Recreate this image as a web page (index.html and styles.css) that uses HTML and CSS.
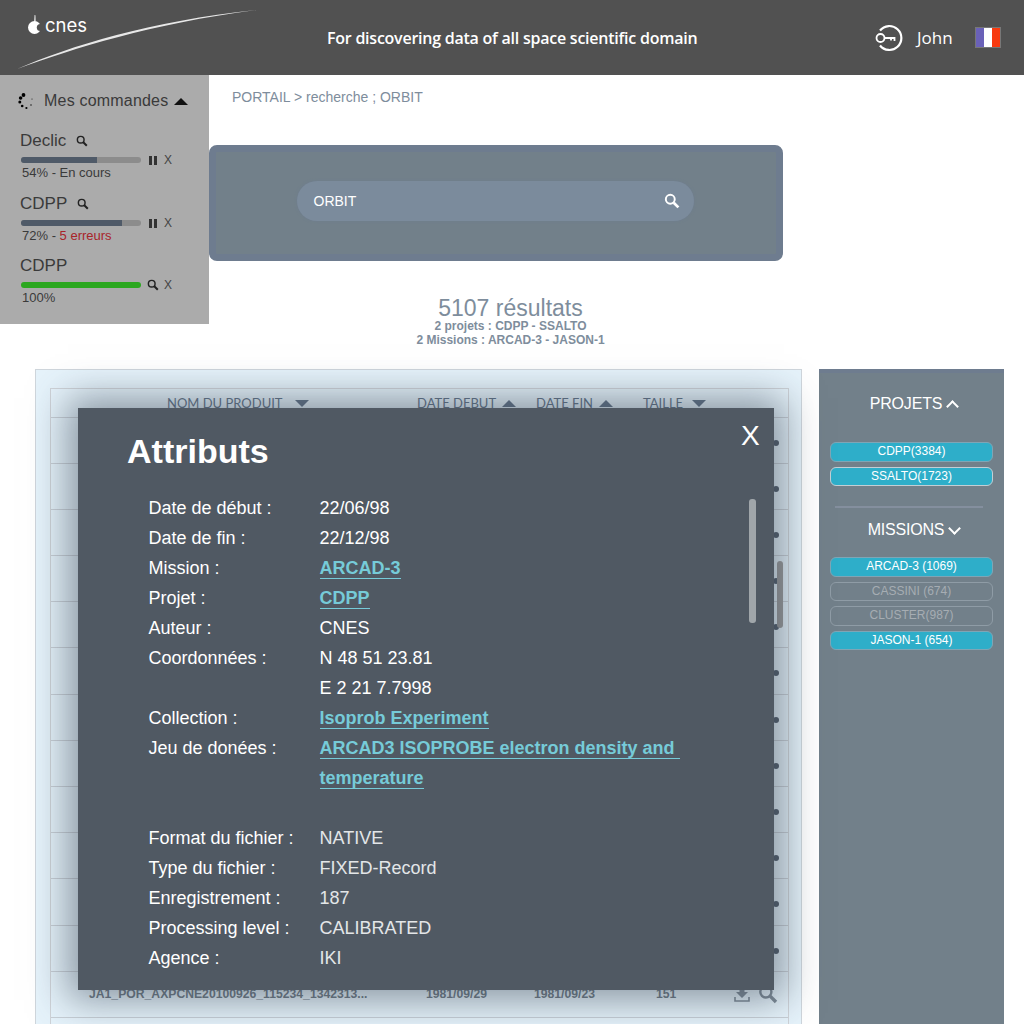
FILE: index.html
```html
<!DOCTYPE html>
<html>

<head>
  <meta charset="UTF-8">
  <title>CNES - Portail</title>
  <link rel="stylesheet" href="styles.css">
</head>

<body>
  <svg class="defs" width="0" height="0">
    <symbol id="loupe" viewBox="0 0 14 14">
      <circle cx="5.5" cy="5.5" r="3.9" fill="none" stroke="currentColor" stroke-width="1.7" />
      <path d="M8.5 8.5L12.6 12.6" stroke="currentColor" stroke-width="2.4" />
    </symbol>
  </svg>

  <header class="topbar">
    <div class="logo">
      <svg class="swoosh" width="260" height="75" viewBox="0 0 260 75">
        <path d="M17 69C70 46 150 21 256 10C150 24 75 48 17 69Z" fill="#e8e8e8" />
      </svg>
      <svg class="logo-mark" width="15" height="20" viewBox="0 0 15 20">
        <path d="M6.6 0L7.4 0.2L7.6 6.6H6.2Z" fill="#fff" />
        <circle cx="6.5" cy="12.5" r="6.5" fill="#fff" />
        <circle cx="12.4" cy="12.5" r="3.6" fill="#515151" />
      </svg>
      <span class="logo-text">cnes</span>
    </div>
    <div class="slogan">For discovering data of all space scientific domain</div>
    <div class="user">
      <svg width="30" height="28" viewBox="0 0 30 28">
        <path d="M6 6.5A12 12 0 1 1 6 21.5" fill="none" stroke="#fff" stroke-width="2.2" />
        <circle cx="6.5" cy="14" r="4" fill="none" stroke="#fff" stroke-width="1.8" />
        <path d="M10.5 14H20.5V17M17 14V16.5" fill="none" stroke="#fff" stroke-width="1.8" />
      </svg>
      <span class="user-name">John</span>
      <div class="flag"><i class="blue"></i><i class="white"></i><i class="red"></i></div>
    </div>
  </header>

  <div class="top">
    <aside class="orders">
      <div class="orders-title">
        <svg width="17" height="18" viewBox="0 0 17 18">
          <circle cx="5.5" cy="3" r="1.9" />
          <circle cx="2.6" cy="6" r="1.8" />
          <circle cx="1.8" cy="10" r="1.5" />
          <circle cx="4.2" cy="14" r="1.3" />
          <circle cx="8.4" cy="16" r="1.1" />
          <circle cx="13" cy="13" r="0.7" />
          <circle cx="14" cy="7" r="0.5" />
        </svg>
        <span>Mes commandes</span>
        <i class="arrow-up dark"></i>
      </div>

      <div class="order first">
        <div class="order-name">Declic <svg class="loupe"><use href="#loupe" /></svg></div>
        <div class="order-bar">
          <div class="track"><div class="fill" style="width: 63%"></div></div>
          <i class="pause"></i><span class="close">X</span>
        </div>
        <div class="order-status">54% - En cours</div>
      </div>

      <div class="order">
        <div class="order-name">CDPP <svg class="loupe"><use href="#loupe" /></svg></div>
        <div class="order-bar">
          <div class="track"><div class="fill" style="width: 84%"></div></div>
          <i class="pause"></i><span class="close">X</span>
        </div>
        <div class="order-status">72% - <span class="errors">5 erreurs</span></div>
      </div>

      <div class="order">
        <div class="order-name">CDPP</div>
        <div class="order-bar">
          <div class="track"><div class="fill done" style="width: 100%"></div></div>
          <svg class="loupe"><use href="#loupe" /></svg><span class="close">X</span>
        </div>
        <div class="order-status">100%</div>
      </div>
    </aside>

    <div class="search-col">
      <div class="breadcrumb">PORTAIL &gt; recherche ; ORBIT</div>
      <div class="search-panel">
        <div class="search-box">
          <span>ORBIT</span>
          <svg class="loupe-big"><use href="#loupe" /></svg>
        </div>
      </div>
      <div class="summary">
        <div class="summary-count">5107 résultats</div>
        <div class="summary-line">2 projets : CDPP - SSALTO</div>
        <div class="summary-line">2 Missions : ARCAD-3 - JASON-1</div>
      </div>
    </div>
  </div>

  <div class="bottom">
    <section class="results">
      <div class="table">
        <div class="row head">
          <div class="c-name">NOM DU PRODUIT <i class="arrow-down"></i></div>
          <div class="c-date">DATE DEBUT <i class="arrow-up"></i></div>
          <div class="c-date2">DATE FIN <i class="arrow-up"></i></div>
          <div class="c-size">TAILLE <i class="arrow-down"></i></div>
        </div>
        <div class="row"><div class="row-icon"></div></div>
        <div class="row"><div class="row-icon"></div></div>
        <div class="row"><div class="row-icon"></div></div>
        <div class="row"><div class="row-icon"></div></div>
        <div class="row"><div class="row-icon"></div></div>
        <div class="row"><div class="row-icon"></div></div>
        <div class="row"><div class="row-icon"></div></div>
        <div class="row"><div class="row-icon"></div></div>
        <div class="row"><div class="row-icon"></div></div>
        <div class="row"><div class="row-icon"></div></div>
        <div class="row"><div class="row-icon"></div></div>
        <div class="row"><div class="row-icon"></div></div>
        <div class="row data">
          <div class="c-name">JA1_POR_AXPCNE20100926_115234_1342313...</div>
          <div class="c-date">1981/09/29</div>
          <div class="c-date2">1981/09/23</div>
          <div class="c-size">151</div>
          <svg class="dl" width="16" height="16" viewBox="0 0 16 16">
            <path d="M5.5 1H10.5V6H14L8 12L2 6H5.5Z" fill="#7d8a96" />
            <path d="M1 11V15H15V11" fill="none" stroke="#7d8a96" stroke-width="1.6" />
          </svg>
          <svg class="loupe-row"><use href="#loupe" /></svg>
        </div>
        <div class="row"></div>
      </div>
      <div class="table-scroll"></div>
    </section>

    <aside class="facets">
      <div class="facet-title">PROJETS <i class="chev up"></i></div>
      <div class="chips">
        <div class="chip on">CDPP(3384)</div>
        <div class="chip on light">SSALTO(1723)</div>
      </div>
      <hr class="facet-sep">
      <div class="facet-title second">MISSIONS <i class="chev"></i></div>
      <div class="chips">
        <div class="chip on">ARCAD-3 (1069)</div>
        <div class="chip">CASSINI (674)</div>
        <div class="chip">CLUSTER(987)</div>
        <div class="chip on">JASON-1 (654)</div>
      </div>
    </aside>
  </div>

  <div class="modal">
    <h2 class="modal-title">Attributs</h2>
    <span class="modal-close">X</span>
    <div class="modal-scroll"></div>
    <dl class="attrs">
      <dt>Date de début :</dt><dd>22/06/98</dd>
      <dt>Date de fin :</dt><dd>22/12/98</dd>
      <dt>Mission :</dt><dd><a>ARCAD-3</a></dd>
      <dt>Projet :</dt><dd><a>CDPP</a></dd>
      <dt>Auteur :</dt><dd>CNES</dd>
      <dt>Coordonnées :</dt><dd>N 48 51 23.81</dd>
      <dt></dt><dd>E 2 21 7.7998</dd>
      <dt>Collection :</dt><dd><a>Isoprob Experiment</a></dd>
      <dt>Jeu de donées :</dt><dd><a>ARCAD3 ISOPROBE electron density and&nbsp;</a></dd>
      <dt></dt><dd><a>temperature</a></dd>
      <dt></dt><dd></dd>
      <dt>Format du fichier :</dt><dd class="thin">NATIVE</dd>
      <dt>Type du fichier :</dt><dd class="thin">FIXED-Record</dd>
      <dt>Enregistrement :</dt><dd class="thin">187</dd>
      <dt>Processing level :</dt><dd class="thin">CALIBRATED</dd>
      <dt>Agence :</dt><dd class="thin">IKI</dd>
    </dl>
  </div>
</body>

</html>
```

FILE: styles.css
```css
html, body {
  margin: 0;
  height: 1024px;
  overflow: hidden;
}

body {
  position: relative;
  font-family: "Liberation Sans", Arial, sans-serif;
  background: #ffffff;
}

.defs {
  position: absolute;
}

/* header */
.topbar {
  position: relative;
  display: flex;
  align-items: center;
  height: 75px;
  background: #515151;
  color: #ffffff;
}

.logo {
  display: flex;
  align-items: center;
  width: 327px;
  padding: 0 0 25px 28px;
  box-sizing: border-box;
  height: 75px;
}

.swoosh {
  position: absolute;
  left: 0;
  top: 0;
}

.logo-text {
  margin-left: 2px;
  font-family: "Inter", sans-serif;
  font-size: 18.5px;
  line-height: 20px;
}

.slogan {
  width: 547px;
  font-family: "Open Sans", sans-serif;
  font-size: 16px;
  font-weight: 600;
  letter-spacing: -0.24px;
}

.user {
  display: flex;
  align-items: center;
}

.user-name {
  margin-left: 13px;
  font-family: "Open Sans", sans-serif;
  font-size: 17px;
}

.flag {
  display: flex;
  width: 24px;
  height: 19px;
  margin-left: 23px;
  outline: 1px solid #777;
}

.flag i {
  flex: 1;
}

.flag .blue { background: #6a61b8; }
.flag .white { background: #ffffff; }
.flag .red { background: #f73a10; }

/* orders + search */
.top {
  display: flex;
  height: 294px;
}

.orders {
  width: 209px;
  height: 249px;
  flex: none;
  padding: 16px 0 0 20px;
  box-sizing: border-box;
  background: #ababab;
  color: #3a3a3a;
}

.orders-title {
  display: flex;
  align-items: center;
  height: 20px;
  margin-left: -2px;
  margin-bottom: 20px;
  font-size: 16px;
  letter-spacing: 0.2px;
}

.orders-title span {
  margin-left: 9px;
}

.arrow-up, .arrow-down {
  display: inline-block;
  width: 0;
  height: 0;
  border-left: 7.5px solid transparent;
  border-right: 7.5px solid transparent;
}

.arrow-up { border-bottom: 7.5px solid #5f7186; }
.arrow-down { border-top: 7.5px solid #5f7186; }

.arrow-up.dark {
  margin-left: 6px;
  border-bottom-color: #111;
}

.order {
  height: 62px;
}

.order.first {
  margin-bottom: 1px;
}

.order-name {
  display: flex;
  align-items: center;
  height: 20px;
  font-size: 17px;
}

.order-name .loupe {
  margin-left: 10px;
}

.loupe {
  width: 12px;
  height: 12px;
  color: #222;
}

.order-bar {
  display: flex;
  align-items: center;
  height: 12px;
  margin-top: 3px;
  margin-left: 1px;
}

.track {
  width: 120px;
  height: 6px;
  border-radius: 3px;
  background: #8c8c8c;
  overflow: hidden;
}

.fill {
  height: 100%;
  background: #4f5a68;
}

.fill.done {
  background: #2ba71f;
}

.pause {
  width: 8px;
  height: 9px;
  margin-left: 8px;
  border-left: 3px solid #333;
  border-right: 3px solid #333;
  box-sizing: border-box;
}

.order-bar .loupe {
  margin-left: 6px;
}

.close {
  margin-left: 7px;
  font-size: 12px;
  color: #444;
}

.order-bar .loupe + .close {
  margin-left: 5px;
}

.order-status {
  margin: -1px 0 0 2px;
  font-size: 13px;
  line-height: 16px;
}

.errors {
  color: #a8242a;
}

.search-col {
  flex: none;
  width: 574px;
}

.breadcrumb {
  height: 70px;
  padding: 14px 0 0 23px;
  box-sizing: border-box;
  font-size: 14px;
  color: #7e8d9c;
}

.search-panel {
  display: flex;
  justify-content: center;
  height: 116px;
  padding-top: 36px;
  padding-right: 2px;
  box-sizing: border-box;
  border-radius: 8px;
  border: 7px solid #6e7c8f;
  background: #72808a;
}

.search-box {
  display: flex;
  align-items: center;
  justify-content: space-between;
  width: 397px;
  height: 40px;
  margin-top: -7px;
  padding: 0 14px 0 17px;
  box-sizing: border-box;
  border-radius: 20px;
  background: #7b8b9c;
  box-shadow: 0 0 3px #6e7c8f;
  color: #ffffff;
  font-size: 14px;
}

.loupe-big {
  width: 16px;
  height: 16px;
  color: #ffffff;
}

.summary {
  margin-top: 36px;
  margin-left: 29px;
  text-align: center;
  color: #7e8d9c;
}

.summary-count {
  margin-bottom: -1px;
  font-size: 23px;
  line-height: 23px;
}

.summary-line {
  font-size: 12px;
  font-weight: 700;
  line-height: 14px;
}

/* results */
.bottom {
  display: flex;
  gap: 17px;
  padding-left: 35px;
  height: 655px;
}

.results {
  position: relative;
  width: 767px;
  padding: 18px 14px 0;
  box-sizing: border-box;
  border: 1px solid #cfd6dc;
  border-bottom: none;
  background: #e6f3fb;
}

.table {
  width: 737px;
  border: 1px solid #cfd3d8;
  border-bottom: none;
}

.row {
  position: relative;
  display: flex;
  align-items: center;
  height: 46.2px;
  box-sizing: border-box;
  border-bottom: 1px solid #c8cfd6;
  color: #6c7883;
  font-size: 12.2px;
}

.row.head {
  height: 28.5px;
  font-family: "Lato", sans-serif;
  font-size: 13px;
  color: #5f7186;
  white-space: nowrap;
}

.row-icon {
  position: absolute;
  right: 9px;
  top: 22px;
  width: 6px;
  height: 6px;
  border-radius: 50%;
  background: #4f5a68;
}

.c-name { margin-left: 116px; width: 250px; }
.c-date { width: 119px; }
.c-date2 { width: 107px; }
.c-size { width: 80px; }

.head .arrow-down {
  margin-left: 6px;
  vertical-align: 1px;
}

.head .arrow-up {
  margin-left: 3px;
  vertical-align: 1px;
}

.head .c-name .arrow-down {
  margin-left: 10px;
}

.row.data {
  font-weight: 700;
  padding-top: 0;
}

.data .c-name {
  margin-left: 38px;
  width: 337px;
  flex: none;
  white-space: nowrap;
}

.data .c-date { width: 108px; flex: none; }
.data .c-date2 { width: 122px; flex: none; }
.data .c-size { width: 78px; flex: none; }

.loupe-row {
  width: 20px;
  height: 20px;
  margin-left: 8px;
  color: #7d8a96;
}

.table-scroll {
  position: absolute;
  left: 741px;
  top: 191px;
  width: 6px;
  height: 67px;
  border-radius: 3px;
  background: #9a9a9a;
}

/* facets */
.facets {
  width: 185px;
  padding: 0 11px;
  box-sizing: border-box;
  background: #72808a;
  border-top: 4px solid #6e7c8f;
  color: #ffffff;
}

.facet-title {
  display: flex;
  align-items: center;
  justify-content: center;
  gap: 6px;
  height: 22px;
  margin-top: 20px;
  margin-bottom: 27px;
  padding-left: 4px;
  font-size: 16px;
  letter-spacing: -0.2px;
}

.facet-title.second {
  margin-top: 11px;
  margin-bottom: 16px;
}

.chev {
  width: 7px;
  height: 7px;
  margin-top: -4px;
  border-right: 2px solid #ffffff;
  border-bottom: 2px solid #ffffff;
  transform: rotate(45deg);
}

.chev.up {
  margin-top: 5px;
  transform: rotate(225deg);
}

.chips {
  display: flex;
  flex-direction: column;
  gap: 5px;
}

.chip {
  height: 19.5px;
  box-sizing: border-box;
  border: 1px solid #8f9ca6;
  border-radius: 6px;
  font-size: 12px;
  line-height: 17.5px;
  text-align: center;
  color: #a6adb3;
}

.chip.on {
  border-color: #7fa5b5;
  background: #2eaec9;
  color: #ffffff;
}

.chip.light {
  border-color: #c3ced4;
}

.facet-sep {
  height: 2px;
  margin: 20px 10px 0 5px;
  border: none;
  background: #848f9e;
}

/* attributes modal */
.modal {
  position: absolute;
  left: 78px;
  top: 408px;
  width: 696px;
  height: 582px;
  background: #505963;
  box-shadow: 0 0 36px 10px rgba(60, 72, 88, 0.55);
  color: #ffffff;
}

.modal-title {
  margin: 24px 0 0 49px;
  font-size: 34px;
  line-height: 38px;
  font-weight: 700;
}

.modal-close {
  position: absolute;
  left: 663px;
  top: 11px;
  font-size: 28px;
  line-height: 34px;
}

.modal-scroll {
  position: absolute;
  left: 671px;
  top: 91px;
  width: 7px;
  height: 124px;
  border-radius: 3px;
  background: #a0a6aa;
}

.attrs {
  display: grid;
  grid-template-columns: 171px 370px;
  grid-auto-rows: 30px;
  margin: 23px 0 0 70.5px;
  font-size: 18px;
  line-height: 30px;
}

.attrs dt, .attrs dd {
  margin: 0;
}

.attrs dd a {
  color: #76cbd8;
  font-weight: 700;
  border-bottom: 1px solid #76cbd8;
}

.attrs dd.thin {
  color: #e3e6e8;
}
```
